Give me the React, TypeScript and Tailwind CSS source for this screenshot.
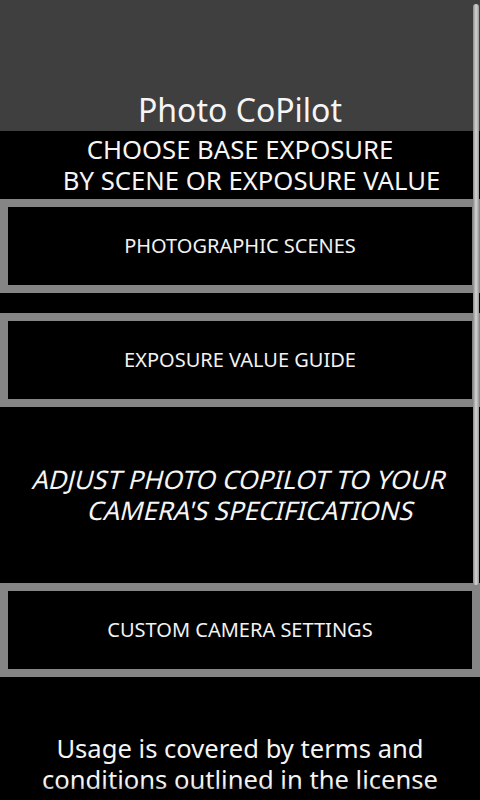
import React from 'react';

const font = { fontFamily: '"Noto Sans", "Open Sans", sans-serif' };

const MenuButton = ({ label }: { label: string }) => {
  return <div className="h-[94px] border-[8px] border-[#858585] bg-black flex items-center justify-center">
      <span className="text-[20px] text-[#f2f2f2] leading-none">{label}</span>
    </div>;
};

const App = () => {
  return <div className="relative w-[480px] h-[800px] overflow-hidden bg-black text-white" style={font}>
      <header className="h-[131px] bg-[#3f3f3f] pt-[94px] text-center">
        <h1 className="text-[32px] leading-[32px] text-[#f5f5f5]">Photo CoPilot</h1>
      </header>

      <div className="h-[68px] pt-[3px] text-[25.7px] leading-[31px] text-[#f5f5f5]">
        <div className="text-center">CHOOSE BASE EXPOSURE</div>
        <div className="text-center pl-[23px]">BY SCENE OR EXPOSURE VALUE</div>
      </div>

      <MenuButton label="PHOTOGRAPHIC SCENES" />
      <div className="h-[20px]" />
      <MenuButton label="EXPOSURE VALUE GUIDE" />

      {/* slanted like the device's synthetic italic */}
      <div className="h-[176px] pt-[57px] text-[25.7px] leading-[31px] text-[#f5f5f5]">
        <div className="text-center -skew-x-[14deg]">ADJUST PHOTO COPILOT TO YOUR</div>
        <div className="text-center pl-[23px] -skew-x-[14deg]">CAMERA'S SPECIFICATIONS</div>
      </div>

      <MenuButton label="CUSTOM CAMERA SETTINGS" />

      <div className="pt-[56px] text-[25.6px] leading-[31px] text-[#f5f5f5] text-center">
        <div>Usage is covered by terms and</div>
        <div>conditions outlined in the license</div>
      </div>

      {/* fading edge at the bottom of the scroll view */}
      <div className="absolute left-0 right-0 bottom-0 h-[16px] bg-gradient-to-b from-transparent to-black/70" />

      {/* scrollbar thumb */}
      <div className="absolute left-[473px] top-[4px] w-[6px] h-[581px] rounded-[3px] bg-gradient-to-r from-[#8a8a8a] via-[#d4d4d4] to-[#9a9a9a]" />
    </div>;
};

export default App;
